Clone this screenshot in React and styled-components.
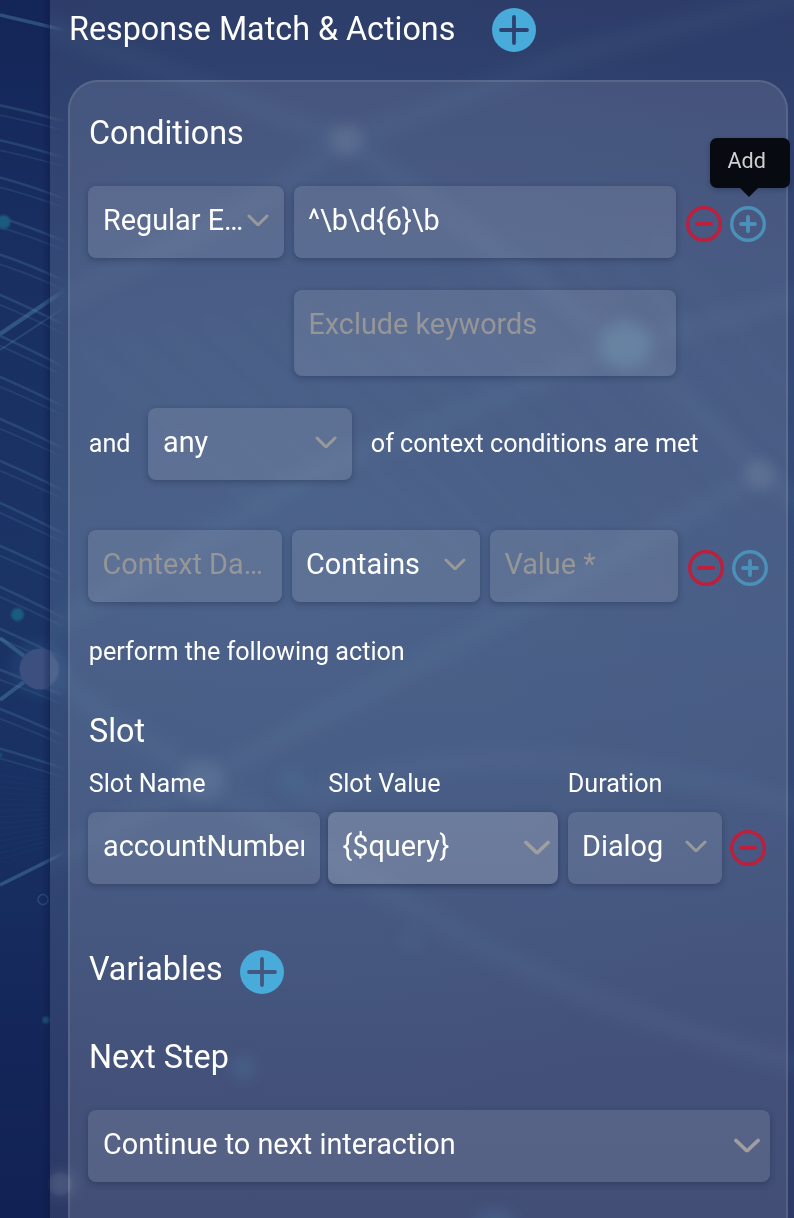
import React from "react";
import styled, { createGlobalStyle } from "styled-components";

const GlobalStyle = createGlobalStyle`
  *, *::before, *::after { box-sizing: border-box; }
  html, body { margin: 0; padding: 0; background: #14265a; }
  body { font-family: Roboto, "Liberation Sans", sans-serif; color: #fff; }
`;

const Page = styled.div`
  display: grid;
  grid-template: 1218px / 794px;
  overflow: hidden;
  background: linear-gradient(180deg, #142557 0%, #192f62 22%, #1b3466 50%, #182f62 68%, #142659 85%, #122153 100%);
`;

const Backdrop = styled.svg`
  grid-area: 1 / 1;
  display: block;
  width: 794px;
  height: 1218px;
`;

const Panel = styled.main`
  grid-area: 1 / 1;
  position: relative;
  margin-left: 50px;
  padding: 8px 6px 0 18px;
  display: flex;
  flex-direction: column;
  overflow: hidden;
`;

const PanelHeader = styled.header`
  display: flex;
  align-items: center;
  height: 44px;
  gap: 37px;
  margin-bottom: 28px;
`;

const Card = styled.section`
  width: 720px;
  height: 1200px;
  flex: none;
  border: 2px solid rgba(255, 255, 255, 0.1);
  border-radius: 30px;
  background: rgba(255, 255, 255, 0.105);
  padding: 27px 0 0 18px;
`;

const Heading = styled.h2`
  margin: 0;
  padding: ${(p) => (p.$raised ? 0 : 1)}px 0 ${(p) => (p.$raised ? 1 : 0)}px 1px;
  font-size: 32.3px;
  font-weight: 400;
  line-height: 47px;
  white-space: nowrap;
`;

const HeadingRow = styled.div`
  display: flex;
  align-items: center;
  height: 48px;
  gap: 17px;
  margin-top: ${(p) => p.$top || 0}px;
`;

const Row = styled.div`
  display: flex;
  align-items: center;
  gap: ${(p) => p.$gap ?? 10}px;
  margin-top: ${(p) => p.$top || 0}px;
  padding-left: ${(p) => p.$indent || 0}px;
`;

const Note = styled.span`
  font-size: 25.15px;
  line-height: 32px;
  white-space: nowrap;
  width: ${(p) => (p.$width ? `${p.$width}px` : "auto")};
  padding-left: 0.8px;
`;

const Field = styled.div`
  flex: none;
  display: flex;
  align-items: center;
  justify-content: space-between;
  width: ${(p) => p.$width}px;
  height: ${(p) => p.$height || 72}px;
  padding: 0 ${(p) => p.$right ?? 15}px ${(p) => p.$bottom ?? 4}px ${(p) => p.$left ?? 15}px;
  border-radius: 8px;
  background: rgba(255, 255, 255, ${(p) => (p.$active ? 0.2 : 0.105)});
  box-shadow: 0 2px 6px rgba(20, 30, 60, ${(p) => (p.$active ? 0.55 : 0.34)});
`;

const FieldText = styled.span`
  min-width: 0;
  flex: 1;
  font-size: 28.8px;
  line-height: 40px;
  color: ${(p) => (p.$muted ? "#969698" : "#fff")};
  white-space: nowrap;
  overflow: hidden;
  text-overflow: ${(p) => (p.$clip ? "clip" : "ellipsis")};
`;

const IconButton = styled.button`
  flex: none;
  position: relative;
  display: block;
  width: ${(p) => p.$size || 36}px;
  height: ${(p) => p.$size || 36}px;
  margin: ${(p) => p.$drop ?? 4}px 0 0;
  padding: 0;
  border: 0;
  background: none;
  color: ${(p) => p.$color};
`;

const Actions = styled.div`
  display: flex;
  gap: 8px;
`;

const Tooltip = styled.span`
  position: absolute;
  left: -20px;
  top: -68px;
  width: 80px;
  height: 50px;
  padding-left: 17.5px;
  border-radius: 7px;
  background: #070a10;
  color: #cfcfd1;
  font: 400 21.6px/46px Roboto, sans-serif;
  text-align: left;
  box-shadow: 0 2px 5px rgba(10, 15, 35, 0.25);
  &::after {
    content: "";
    position: absolute;
    left: 30px;
    top: 50px;
    border: 9px solid transparent;
    border-top-color: #070a10;
    border-bottom: 0;
  }
`;

function AddFilled({ cut, drop }) {
  return (
    <IconButton $size={44} $drop={drop} $color="#48abda" aria-label="Add">
      <svg width="44" height="44" viewBox="0 0 44 44">
        <circle cx="22" cy="22" r="22" fill="currentColor" />
        <path d="M22 9v26M9 22h26" stroke={cut} strokeWidth="3.8" strokeLinecap="round" />
      </svg>
    </IconButton>
  );
}

function RoundAction({ add, drop, children }) {
  return (
    <IconButton $drop={drop} $color={add ? "#4b90b8" : "#bd1f3d"} aria-label={add ? "Add" : "Remove"}>
      <svg width="36" height="36" viewBox="0 0 36 36" fill="none" stroke="currentColor" strokeLinecap="round">
        <circle cx="18" cy="18" r="16.3" strokeWidth="3.4" />
        <path d={add ? "M18 11v14M11 18h14" : "M11 18h14"} strokeWidth="3.9" />
      </svg>
      {children}
    </IconButton>
  );
}

const ChevronSvg = styled.svg`
  flex: none;
  display: block;
  margin-top: ${(p) => p.$drop || 0}px;
`;

function Chevron({ large }) {
  return large ? (
    <ChevronSvg $drop={4} width="26" height="16" viewBox="0 0 26 16">
      <path d="M2 2.5 13 13 24 2.5" fill="none" stroke="#a09f9f" strokeWidth="3.8" strokeLinecap="round" strokeLinejoin="bevel" />
    </ChevronSvg>
  ) : (
    <ChevronSvg $drop={1} width="22" height="13" viewBox="0 0 22 13">
      <path d="M2 2 11 11 20 2" fill="none" stroke="#99999a" strokeWidth="3" strokeLinecap="round" strokeLinejoin="bevel" />
    </ChevronSvg>
  );
}

const strands = [
  [105, 118], [140, 154], [177, 194], [217, 236], [254, 275], [294, 318], [335, 360], [376, 400],
  [418, 442], [460, 484], [502, 527], [545, 569], [586, 611], [628, 652], [669, 690], [708, 730], [748, 764],
];

const fan = Array.from({ length: 15 }, (_, i) => i);

function NetworkArt() {
  return (
    <Backdrop viewBox="0 0 794 1218" aria-hidden="true">
      <defs>
        <linearGradient id="fade" gradientUnits="userSpaceOnUse" x1="0" y1="0" x2="66" y2="0">
          <stop offset="0" stopColor="#5794b5" stopOpacity=".38" />
          <stop offset=".72" stopColor="#5794b5" stopOpacity=".36" />
          <stop offset=".8" stopColor="#5794b5" stopOpacity=".18" />
          <stop offset="1" stopColor="#5794b5" stopOpacity="0" />
        </linearGradient>
        <radialGradient id="glow" gradientUnits="userSpaceOnUse" cx="280" cy="530" r="620">
          <stop offset="0" stopColor="#2c6496" stopOpacity=".14" />
          <stop offset="1" stopColor="#2c6496" stopOpacity="0" />
        </radialGradient>
        <linearGradient id="edge" x1="0" x2="1">
          <stop offset="0" stopColor="#0b1740" stopOpacity="0" />
          <stop offset="1" stopColor="#0b1740" stopOpacity=".35" />
        </linearGradient>
        <filter id="soft" x="-20%" y="-20%" width="140%" height="140%" colorInterpolationFilters="sRGB">
          <feGaussianBlur stdDeviation="10" />
        </filter>
        <filter id="dot" x="-50%" y="-50%" width="200%" height="200%" colorInterpolationFilters="sRGB">
          <feGaussianBlur stdDeviation="1" />
        </filter>
        <filter id="halo" x="-80%" y="-80%" width="260%" height="260%" colorInterpolationFilters="sRGB">
          <feGaussianBlur stdDeviation="7" />
        </filter>
        <clipPath id="left"><rect width="50" height="1218" /></clipPath>
        <clipPath id="right"><rect x="50" width="744" height="1218" /></clipPath>
      </defs>
      <rect x="50" width="744" height="1218" fill="url(#glow)" />
      <g fill="none" stroke="url(#fade)">
        {strands.map(([a, b], i) => {
          const bow = i < 5 ? 0.42 : 0.5;
          return (
            <g key={a}>
              <path d={`M-2 ${a}Q26 ${a + (b - a) * bow} 68 ${b + (b - a) * 0.36}`} strokeWidth="2.6" opacity=".6" />
              <path d={`M-2 ${a + 10}Q26 ${a + 9.5 + (b - a) * bow} 68 ${b + 9 + (b - a) * 0.36}`} strokeWidth="1.9" opacity=".42" />
            </g>
          );
        })}
        {fan.map((i) => (
          <path key={i} d={`M0 ${775 + i * 6}L66 ${785 + i * 4}`} strokeWidth="1" opacity=".1" />
        ))}
        <path d="M0 15 68 31" strokeWidth="3.5" />
        <path d="M0 334 68 288" strokeWidth="4" />
        <path d="M0 350 68 305" strokeWidth="1.8" opacity=".65" />
        <path d="M0 638 24 656M0 700 24 682" strokeWidth="4" />
        <path d="M0 885 68 851" strokeWidth="3.6" />
      </g>
      <g filter="url(#dot)">
        <circle cx="17.5" cy="614.500" r="6.500" fill="#1b5b80" />
        <circle cx="3.500" cy="222" r="7" fill="#1b5b80" />
        <circle cx="46" cy="1020" r="3.500" fill="#1d5579" />
        <circle cx="0" cy="755" r="2" fill="#1b5b80" />
      </g>
      <circle cx="43" cy="899.500" r="5" fill="none" stroke="#294a79" strokeWidth="1.500" />
      <circle cx="39" cy="669" r="28" fill="#35598c" opacity=".3" filter="url(#halo)" />
      <circle cx="40" cy="669" r="20.500" fill="#3c5080" clipPath="url(#left)" />
      <g clipPath="url(#right)">
        <circle cx="40" cy="669" r="19" fill="#4a5c87" opacity=".55" filter="url(#dot)" />
        <g filter="url(#soft)" fill="none" stroke="#689abc" strokeWidth="14" opacity=".1">
          <path d="M40 24 346 140 625 345 760 475 830 520" />
          <path d="M40 312 270 196 346 140 590 50 840 -15" />
          <path d="M30 640 320 470 625 345 830 290" />
          <path d="M40 669 202 780 400 900Q600 1020 830 1070" />
          <path d="M30 870 202 780 500 620 760 475" />
          <path d="M300 800Q500 715 820 812" />
        </g>
        <g filter="url(#soft)" stroke="#73a0bd" strokeWidth="9" opacity=".05">
          {Array.from({ length: 14 }, (_, i) => (
            <path key={i} d={`M${70 + i * 45} ${340 - i * 8}L${350 + i * 42} ${580 - i * 5}`} />
          ))}
        </g>
        <g filter="url(#halo)">
          <circle cx="346" cy="140" r="16" fill="#8294ac" opacity=".2" />
          <circle cx="625" cy="345" r="25" fill="#50a6bd" opacity=".22" />
          <circle cx="760" cy="475" r="15" fill="#8a94b0" opacity=".2" />
          <circle cx="202" cy="780" r="22" fill="#7896ab" opacity=".17" />
          <circle cx="292" cy="780" r="14" fill="#287da1" opacity=".12" />
          <circle cx="243" cy="1068" r="12" fill="#347daa" opacity=".18" />
          <circle cx="412" cy="940" r="13" fill="#347daa" opacity=".08" />
          <circle cx="495" cy="1230" r="22" fill="#347daa" opacity=".2" />
          <circle cx="62" cy="1184" r="14" fill="#8791aa" opacity=".2" />
        </g>
        <rect x="50" width="744" height="1218" fill="#fff" opacity=".11" />
      </g>
      <circle cx="60" cy="1184" r="11.500" fill="#7987aa" opacity=".14" filter="url(#dot)" />
      <rect x="42" width="8" height="1218" fill="url(#edge)" />
    </Backdrop>
  );
}

export default function App() {
  return (
    <>
      <GlobalStyle />
      <Page>
        <NetworkArt />
        <Panel>
          <PanelHeader>
            <Heading as="h1" $raised>Response Match &amp; Actions</Heading>
            <AddFilled cut="#2d4270" drop={0} />
          </PanelHeader>
          <Card>
            <Heading>Conditions</Heading>
            <Row $top={29}>
              <Field $width={196}>
                <FieldText>Regular Expression</FieldText>
                <Chevron />
              </Field>
              <Field $width={382} $left={14}><FieldText>^\b\d{"{6}"}\b</FieldText></Field>
              <Actions>
                <RoundAction />
                <RoundAction add><Tooltip role="tooltip">Add</Tooltip></RoundAction>
              </Actions>
            </Row>
            <Row $top={32} $indent={206}>
              <Field $width={382} $height={86} $left={14.5} $bottom={18}><FieldText $muted>Exclude keywords</FieldText></Field>
            </Row>
            <Row $top={32} $gap={0}>
              <Note $width={60}>and</Note>
              <Field $width={204}>
                <FieldText>any</FieldText>
                <Chevron />
              </Field>
              <Row $indent={18}><Note>of context conditions are met</Note></Row>
            </Row>
            <Row $top={50}>
              <Field $width={194} $left={14.5}><FieldText $muted>Context Data Name</FieldText></Field>
              <Field $width={188} $left={14} $right={14}>
                <FieldText>Contains</FieldText>
                <Chevron />
              </Field>
              <Field $width={188} $left={14.5}><FieldText $muted>Value *</FieldText></Field>
              <Actions>
                <RoundAction />
                <RoundAction add />
              </Actions>
            </Row>
            <Row $top={34}><Note>perform the following action</Note></Row>
            <HeadingRow $top={39}><Heading>Slot</Heading></HeadingRow>
            <Row $top={13} $gap={0}>
              <Note $width={239.5}>Slot Name</Note>
              <Note $width={239.5}>Slot Value</Note>
              <Note>Duration</Note>
            </Row>
            <Row $top={12} $gap={8}>
              <Field $width={232} $right={16}><FieldText $clip>accountNumber</FieldText></Field>
              <Field $width={230} $left={14.5} $right={8} $active>
                <FieldText>{"{$query}"}</FieldText>
                <Chevron large />
              </Field>
              <Row $indent={2} $gap={8}>
                <Field $width={154} $left={14}>
                  <FieldText>Dialog</FieldText>
                  <Chevron />
                </Field>
                <RoundAction drop={0} />
              </Row>
            </Row>
            <HeadingRow $top={61}>
              <Heading>Variables</Heading>
              <AddFilled cut="#445781" drop={6} />
            </HeadingRow>
            <HeadingRow $top={40}><Heading>Next Step</Heading></HeadingRow>
            <Row $top={29}>
              <Field $width={682} $right={10}>
                <FieldText>Continue to next interaction</FieldText>
                <Chevron large />
              </Field>
            </Row>
          </Card>
        </Panel>
      </Page>
    </>
  );
}
